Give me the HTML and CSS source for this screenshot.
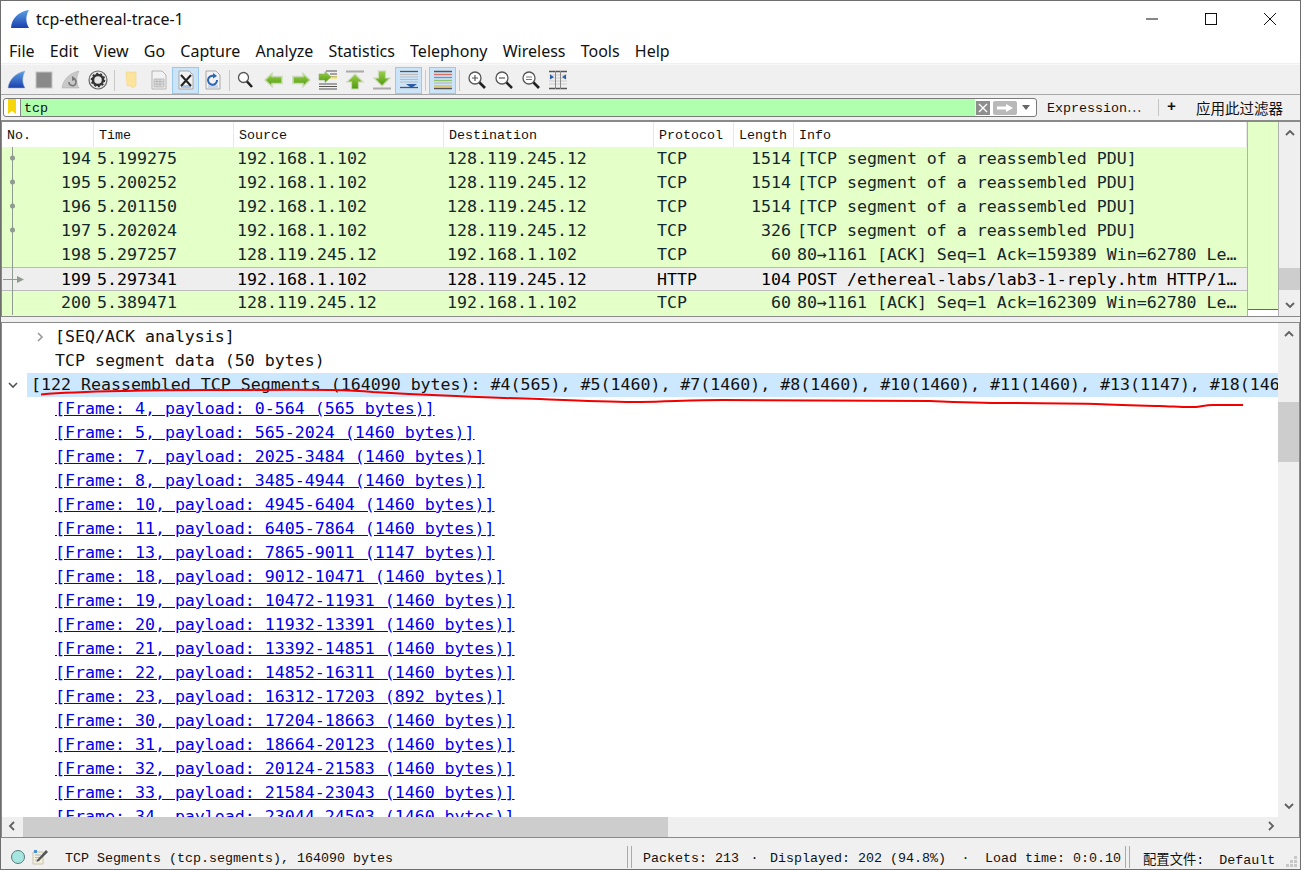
FILE: index.html
```html
<!DOCTYPE html>
<html lang="en">
<head>
<meta charset="utf-8">
<title>tcp-ethereal-trace-1</title>
<link rel="stylesheet" href="styles.css">
</head>
<body>
<div class="app">
  <svg width="0" height="0" class="defs">
    <defs>
      <linearGradient id="fin" x1="0" y1="0" x2="0" y2="1"><stop offset="0" stop-color="#5aa0e6"/><stop offset="1" stop-color="#1c3fae"/></linearGradient>
      <linearGradient id="green" x1="0" y1="0" x2="0" y2="1"><stop offset="0" stop-color="#9ad04a"/><stop offset="1" stop-color="#4e9a0e"/></linearGradient>
    </defs>
  </svg>

  <header class="titlebar">
    <svg class="app-icon" width="20" height="20" viewBox="0 0 20 20"><path d="M1 19C1.500 10 8 2.500 19 1C15.500 7 15.500 13 19 19Z" fill="url(#fin)"/></svg>
    <span class="title">tcp-ethereal-trace-1</span>
    <div class="winctl">
      <svg width="12" height="12" viewBox="0 0 12 12"><path d="M0 6H12" stroke="#111" fill="none"/></svg>
      <svg width="12" height="12" viewBox="0 0 12 12"><rect x=".5" y=".5" width="11" height="11" stroke="#111" fill="none"/></svg>
      <svg width="12" height="12" viewBox="0 0 12 12"><path d="M0 0L12 12M12 0L0 12" stroke="#111" fill="none"/></svg>
    </div>
  </header>

  <nav class="menubar">
    <span>File</span><span>Edit</span><span>View</span><span>Go</span><span>Capture</span><span>Analyze</span><span>Statistics</span><span>Telephony</span><span>Wireless</span><span>Tools</span><span>Help</span>
  </nav>

  <div class="toolbar">
    <span class="tool"><svg width="20" height="20" viewBox="0 0 20 20"><path d="M1 18C2 10 8 3 18 1C15 7 15 13 18 18Z" fill="url(#fin)" stroke="#9fb0c8" stroke-width=".5"/></svg></span>
    <span class="tool"><svg width="20" height="20" viewBox="0 0 20 20"><rect x="2" y="2" width="16" height="16" fill="#8a8a8a" stroke="#c4c4c4"/></svg></span>
    <span class="tool"><svg width="20" height="20" viewBox="0 0 20 20"><path d="M1 18C2 10 8 3 18 1C15 7 15 13 18 18Z" fill="#c8c8c8" stroke="#aaa" stroke-width=".5"/><path d="M13 9A3.500 3.500 0 1 1 8 12" fill="none" stroke="#777" stroke-width="1.500"/><path d="M11 6L15 9L11 11Z" fill="#777"/></svg></span>
    <span class="tool"><svg width="20" height="20" viewBox="0 0 20 20"><circle cx="10" cy="10" r="9" fill="#e8e8e8" stroke="#666" stroke-width="1.200"/><circle cx="10" cy="10" r="5" fill="none" stroke="#333" stroke-width="2.500"/><circle cx="10" cy="10" r="6.500" fill="none" stroke="#333" stroke-width="1.500" stroke-dasharray="2 2"/></svg></span>
    <span class="tool-sep"></span>
    <span class="tool"><svg width="20" height="20" viewBox="0 0 20 20"><path d="M4 2H10L11 4V2H14V16L10 18V16H5Z" fill="#fce49c" stroke="#f2d27c" stroke-width=".5"/></svg></span>
    <span class="tool"><svg width="20" height="20" viewBox="0 0 20 20"><path d="M3 1H13L17 5V19H3Z" fill="#f2f2f2" stroke="#b4b4b4"/><path d="M5 9H15V17H5ZM5 11.500H15M5 14H15M8 9V17M11 9V17" fill="#ddd" stroke="#b4b4b4" stroke-width=".8"/></svg></span>
    <span class="tool tool-on"><svg width="20" height="20" viewBox="0 0 20 20"><path d="M3 1H13L17 5V19H3Z" fill="#f2f2f2" stroke="#a8a8a8"/><path d="M5 15H15V18H5Z" fill="#a9c4e4"/><path d="M5 5L15 16M15 5L5 16" stroke="#222" stroke-width="2"/></svg></span>
    <span class="tool"><svg width="20" height="20" viewBox="0 0 20 20"><path d="M3 1H13L17 5V19H3Z" fill="#f2f2f2" stroke="#a8a8a8"/><path d="M5 15H15V18H5Z" fill="#c9d8ea"/><path d="M14 10A4.500 4.500 0 1 1 11 6" fill="none" stroke="#2a64b8" stroke-width="2"/><path d="M10 3L14 6L10 8.500Z" fill="#2a64b8"/></svg></span>
    <span class="tool-sep"></span>
    <span class="tool"><svg width="20" height="20" viewBox="0 0 20 20"><circle cx="6.500" cy="7.500" r="5" fill="#fff" stroke="#555" stroke-width="1.300"/><path d="M10 11.500L15 17" stroke="#222" stroke-width="2.600"/></svg></span>
    <span class="tool"><svg width="20" height="20" viewBox="0 0 20 20"><path d="M1 10L8 3.500V6.500H18V13.500H8V16.500Z" fill="url(#green)" stroke="#c9d9b4" stroke-width="1.500"/></svg></span>
    <span class="tool"><svg width="20" height="20" viewBox="0 0 20 20"><path d="M19 10L12 3.500V6.500H2V13.500H12V16.500Z" fill="url(#green)" stroke="#c9d9b4" stroke-width="1.500"/></svg></span>
    <span class="tool"><svg width="20" height="20" viewBox="0 0 20 20"><path d="M8 1H19M12 4H19M12 7H19M1 14H19M1 16.500H19M1 19H19" stroke="#555" stroke-width="1.200"/><path d="M12 7.500H19" stroke="#f3da4a" stroke-width="2"/><path d="M13 7L7 1.500V4H1V10H7V12.500Z" fill="url(#green)" stroke="#8cab6c" stroke-width=".6"/></svg></span>
    <span class="tool"><svg width="20" height="20" viewBox="0 0 20 20"><path d="M1 1.500H19" stroke="#aaa" stroke-width="2"/><path d="M10 4L18 12H13.500V19H6.500V12H2Z" fill="url(#green)" stroke="#c9d9b4" stroke-width="1.200"/></svg></span>
    <span class="tool"><svg width="20" height="20" viewBox="0 0 20 20"><path d="M1 18.500H19" stroke="#aaa" stroke-width="2"/><path d="M10 16L18 8H13.500V1H6.500V8H2Z" fill="url(#green)" stroke="#c9d9b4" stroke-width="1.200"/></svg></span>
    <span class="tool tool-on"><svg width="20" height="20" viewBox="0 0 20 20"><path d="M1 1.500H19" stroke="#555" stroke-width="1.300"/><path d="M1 4.500H19M1 7H19M1 9.500H19M1 12H19" stroke="#bbb"/><path d="M1 17.500H19" stroke="#555" stroke-width="1.300"/><path d="M7 14H18L12.500 18Z" fill="#2a5ca8"/></svg></span>
    <span class="tool-sep"></span>
    <span class="tool tool-on"><svg width="20" height="20" viewBox="0 0 20 20"><path d="M1 1.500H19M1 18.500H19" stroke="#555" stroke-width="1.300"/><path d="M1 4.500H19" stroke="#d96a5c" stroke-width="1.300"/><path d="M1 7.500H19" stroke="#6a8fd0" stroke-width="1.300"/><path d="M1 10.500H19" stroke="#8cc46c" stroke-width="1.300"/><path d="M1 13H19" stroke="#bbb" stroke-width="1.300"/><path d="M1 16H19" stroke="#e0b83c" stroke-width="1.300"/></svg></span>
    <span class="tool-sep"></span>
    <span class="tool"><svg width="20" height="20" viewBox="0 0 20 20"><circle cx="8" cy="8" r="6" fill="#fff" stroke="#555" stroke-width="1.300"/><path d="M5 8H11M8 5V11" stroke="#555" stroke-width="1.200"/><path d="M12.500 12.500L18 18" stroke="#222" stroke-width="2.600"/></svg></span>
    <span class="tool"><svg width="20" height="20" viewBox="0 0 20 20"><circle cx="8" cy="8" r="6" fill="#fff" stroke="#555" stroke-width="1.300"/><path d="M5 8H11" stroke="#555" stroke-width="1.200"/><path d="M12.500 12.500L18 18" stroke="#222" stroke-width="2.600"/></svg></span>
    <span class="tool"><svg width="20" height="20" viewBox="0 0 20 20"><circle cx="8" cy="8" r="6" fill="#fff" stroke="#555" stroke-width="1.300"/><path d="M5 7H11M5 9.500H11" stroke="#777"/><path d="M12.500 12.500L18 18" stroke="#222" stroke-width="2.600"/></svg></span>
    <span class="tool"><svg width="20" height="20" viewBox="0 0 20 20"><path d="M1 1.500H19M1 18.500H19" stroke="#555" stroke-width="1.300"/><path d="M1 5H19M1 8H19M1 11H19M1 14H19" stroke="#ccc"/><path d="M7.500 1V19M12.500 1V19" stroke="#888"/><path d="M2 4.500L6 7L2 9.500ZM18 4.500L14 7L18 9.500Z" fill="#2a5ca8"/></svg></span>
  </div>

  <div class="filterbar">
    <div class="filterbox">
      <span class="bookmark"><svg width="10" height="16" viewBox="0 0 10 16"><path d="M1 0H9V15L5 12L1 15Z" fill="#f5d60a"/></svg></span>
      <span class="filter-input">tcp</span>
      <span class="clear-btn"><svg width="14" height="14" viewBox="0 0 14 14"><rect width="14" height="14" fill="#8e8e8e"/><path d="M3 3L11 11M11 3L3 11" stroke="#fff" stroke-width="1.400"/></svg></span>
      <span class="apply-btn"><svg width="24" height="14" viewBox="0 0 24 14"><rect width="24" height="14" rx="2" fill="#b9b9b9"/><path d="M4 5.500H13V3L20 7L13 11V8.500H4Z" fill="#fff"/></svg></span>
      <span class="drop-btn"><svg width="8" height="5" viewBox="0 0 8 5"><path d="M0 0H8L4 5Z" fill="#666"/></svg></span>
    </div>
    <span class="expr">Expression<span class="cjk-dots">…</span></span>
    <span class="filter-sep"></span>
    <span class="plus">+</span>
    <span class="apply-label">应用此过滤器</span>
  </div>

  <section class="pane packets">
    <div class="packet-main">
      <div class="packet-cols packet-head">
        <span>No.</span><span>Time</span><span>Source</span><span>Destination</span><span>Protocol</span><span>Length</span><span>Info</span>
      </div>
      <div class="packet-body">
        <div class="packet-cols packet-row"><span class="num">194</span><span>5.199275</span><span>192.168.1.102</span><span>128.119.245.12</span><span>TCP</span><span class="num">1514</span><span>[TCP segment of a reassembled PDU]</span></div>
        <div class="packet-cols packet-row"><span class="num">195</span><span>5.200252</span><span>192.168.1.102</span><span>128.119.245.12</span><span>TCP</span><span class="num">1514</span><span>[TCP segment of a reassembled PDU]</span></div>
        <div class="packet-cols packet-row"><span class="num">196</span><span>5.201150</span><span>192.168.1.102</span><span>128.119.245.12</span><span>TCP</span><span class="num">1514</span><span>[TCP segment of a reassembled PDU]</span></div>
        <div class="packet-cols packet-row"><span class="num">197</span><span>5.202024</span><span>192.168.1.102</span><span>128.119.245.12</span><span>TCP</span><span class="num">326</span><span>[TCP segment of a reassembled PDU]</span></div>
        <div class="packet-cols packet-row"><span class="num">198</span><span>5.297257</span><span>128.119.245.12</span><span>192.168.1.102</span><span>TCP</span><span class="num">60</span><span>80→1161 [ACK] Seq=1 Ack=159389 Win=62780 Le…</span></div>
        <div class="packet-cols packet-row packet-sel"><span class="num">199</span><span>5.297341</span><span>192.168.1.102</span><span>128.119.245.12</span><span>HTTP</span><span class="num">104</span><span>POST /ethereal-labs/lab3-1-reply.htm HTTP/1…</span></div>
        <div class="packet-cols packet-row"><span class="num">200</span><span>5.389471</span><span>128.119.245.12</span><span>192.168.1.102</span><span>TCP</span><span class="num">60</span><span>80→1161 [ACK] Seq=1 Ack=162309 Win=62780 Le…</span></div>
        <svg class="conv-tree" width="30" height="168" viewBox="0 0 30 168"><path d="M10.500 0V168" stroke="#8f9a90"/><circle cx="10.500" cy="11" r="2.500" fill="#8f9a90"/><circle cx="10.500" cy="35" r="2.500" fill="#8f9a90"/><circle cx="10.500" cy="59" r="2.500" fill="#8f9a90"/><circle cx="10.500" cy="83" r="2.500" fill="#8f9a90"/><path d="M1 132.500H16" stroke="#8f9a90"/><path d="M15 129L22 132.500L15 136Z" fill="#8f9a90"/></svg>
      </div>
    </div>
    <div class="minimap"></div>
    <div class="vscroll">
      <svg class="arrow" width="12" height="12" viewBox="0 0 12 12"><path d="M2 8L6 4L10 8" fill="none" stroke="#606060" stroke-width="1.800"/></svg>
      <div class="vtrack list-track"><div class="thumb list-thumb"></div></div>
      <svg class="arrow" width="12" height="12" viewBox="0 0 12 12"><path d="M2 4L6 8L10 4" fill="none" stroke="#606060" stroke-width="1.800"/></svg>
    </div>
  </section>

  <div class="splitter"></div>

  <section class="pane details">
    <div class="details-top">
      <div class="details-body">
        <div class="dt dt-child"><svg class="tw" width="12" height="12" viewBox="0 0 12 12"><path d="M4 2L8 6L4 10" fill="none" stroke="#999" stroke-width="1.600"/></svg><span>[SEQ/ACK analysis]</span></div>
        <div class="dt dt-leaf">TCP segment data (50 bytes)</div>
        <div class="dt dt-open"><svg class="tw" width="12" height="12" viewBox="0 0 12 12"><path d="M2 4L6 8L10 4" fill="none" stroke="#555" stroke-width="1.600"/></svg><span class="dt-hl">[122 Reassembled TCP Segments (164090 bytes): #4(565), #5(1460), #7(1460), #8(1460), #10(1460), #11(1460), #13(1147), #18(1460), #19(1460), #20(1460)</span></div>
        <div class="dt dt-leaf dt-link">[Frame: 4, payload: 0-564 (565 bytes)]</div>
        <div class="dt dt-leaf dt-link">[Frame: 5, payload: 565-2024 (1460 bytes)]</div>
        <div class="dt dt-leaf dt-link">[Frame: 7, payload: 2025-3484 (1460 bytes)]</div>
        <div class="dt dt-leaf dt-link">[Frame: 8, payload: 3485-4944 (1460 bytes)]</div>
        <div class="dt dt-leaf dt-link">[Frame: 10, payload: 4945-6404 (1460 bytes)]</div>
        <div class="dt dt-leaf dt-link">[Frame: 11, payload: 6405-7864 (1460 bytes)]</div>
        <div class="dt dt-leaf dt-link">[Frame: 13, payload: 7865-9011 (1147 bytes)]</div>
        <div class="dt dt-leaf dt-link">[Frame: 18, payload: 9012-10471 (1460 bytes)]</div>
        <div class="dt dt-leaf dt-link">[Frame: 19, payload: 10472-11931 (1460 bytes)]</div>
        <div class="dt dt-leaf dt-link">[Frame: 20, payload: 11932-13391 (1460 bytes)]</div>
        <div class="dt dt-leaf dt-link">[Frame: 21, payload: 13392-14851 (1460 bytes)]</div>
        <div class="dt dt-leaf dt-link">[Frame: 22, payload: 14852-16311 (1460 bytes)]</div>
        <div class="dt dt-leaf dt-link">[Frame: 23, payload: 16312-17203 (892 bytes)]</div>
        <div class="dt dt-leaf dt-link">[Frame: 30, payload: 17204-18663 (1460 bytes)]</div>
        <div class="dt dt-leaf dt-link">[Frame: 31, payload: 18664-20123 (1460 bytes)]</div>
        <div class="dt dt-leaf dt-link">[Frame: 32, payload: 20124-21583 (1460 bytes)]</div>
        <div class="dt dt-leaf dt-link">[Frame: 33, payload: 21584-23043 (1460 bytes)]</div>
        <div class="dt dt-leaf dt-link">[Frame: 34, payload: 23044-24503 (1460 bytes)]</div>
      </div>
      <div class="vscroll">
        <svg class="arrow" width="12" height="12" viewBox="0 0 12 12"><path d="M2 8L6 4L10 8" fill="none" stroke="#606060" stroke-width="1.800"/></svg>
        <div class="vtrack detail-track"><div class="thumb detail-thumb"></div></div>
        <svg class="arrow" width="12" height="12" viewBox="0 0 12 12"><path d="M2 4L6 8L10 4" fill="none" stroke="#606060" stroke-width="1.800"/></svg>
      </div>
    </div>
    <div class="hscroll">
      <svg class="arrow" width="12" height="12" viewBox="0 0 12 12"><path d="M8 2L4 6L8 10" fill="none" stroke="#606060" stroke-width="1.800"/></svg>
      <div class="htrack"><div class="thumb hthumb"></div></div>
      <svg class="arrow" width="12" height="12" viewBox="0 0 12 12"><path d="M4 2L8 6L4 10" fill="none" stroke="#606060" stroke-width="1.800"/></svg>
    </div>
  </section>

  <footer class="statusbar">
    <span class="led"></span>
    <svg class="note" width="16" height="16" viewBox="0 0 16 16"><path d="M1 3H11V15H1Z" fill="#f4f0dc" stroke="#c8c4ac"/><path d="M3 6H9M3 8.500H9M3 11H8" stroke="#a8b8c8"/><path d="M5 11L14 1L16 3L7 12L4.500 13Z" fill="#555"/><path d="M2 1H5V4H2Z" fill="#4a90d0"/></svg>
    <span class="status-field">TCP Segments (tcp.segments), 164090 bytes</span>
    <span class="status-sep"></span>
    <span class="status-stats"><span>Packets: 213</span><span class="dot">·</span><span>Displayed: 202 (94.8%)</span><span class="dot dot-wide">·</span><span>Load time: 0:0.10</span></span>
    <span class="status-sep status-sep2"></span>
    <span class="status-profile">配置文件: Default</span>
    <svg class="grip" width="12" height="12" viewBox="0 0 12 12"><path d="M8 0H11V3H8ZM4 4H7V7H4ZM8 4H11V7H8ZM0 8H3V11H0ZM4 8H7V11H4ZM8 8H11V11H8Z" fill="#c8c8c8"/></svg>
  </footer>

  <svg class="scribble" width="1301" height="870" viewBox="0 0 1301 870"><path d="M41 394.500C70 392 100 391.500 125 391C160 390 190 390 207 390C250 390 300 389.500 332 390C350 390.500 360 391 373 392C400 393.500 430 395 456 396C490 397.500 515 398.500 540 399C580 400.500 610 402 640 402C670 401.500 695 400 723 400C790 400 860 400.500 930 401C960 402 985 403 1013 403C1045 403.500 1070 403.500 1096 404C1120 405 1140 405.500 1159 406C1175 406.500 1185 407.500 1196 407C1203 406 1207 405 1213 405C1225 405 1235 405 1243 405" fill="none" stroke="#f20000" stroke-width="2"/></svg>
</div>
</body>
</html>
```

FILE: styles.css
```css
* { box-sizing: border-box; }
html, body { margin: 0; padding: 0; }
body { width: 1301px; height: 870px; overflow: hidden; background: #f0f0f0; font-family: "Liberation Mono", monospace; }

.app {
  position: relative;
  width: 1301px;
  height: 870px;
  display: flex;
  flex-direction: column;
  border: 1px solid #6e6e6e;
  background: #f0f0f0;
  overflow: hidden;
}
.defs { position: absolute; }

.titlebar {
  height: 37px;
  flex: none;
  display: flex;
  align-items: center;
  padding-left: 9px;
  background: #fff;
  font-family: "Noto Sans", sans-serif;
  font-size: 16px;
  color: #111;
}
.app-icon { flex: none; margin-bottom: 1px; }
.title { margin-left: 6px; margin-bottom: 1px; }
.winctl { margin-left: auto; display: flex; gap: 47px; padding-right: 24px; margin-bottom: 2px; }

.menubar {
  height: 26px;
  flex: none;
  display: flex;
  align-items: center;
  gap: 15.2px;
  padding-left: 8px;
  background: #fff;
  font-family: "Noto Sans", sans-serif;
  font-size: 16px;
  color: #111;
  border-bottom: 1px solid #f0f0f0;
}

.toolbar {
  height: 30px;
  flex: none;
  display: flex;
  align-items: center;
  padding: 1px 0 0 2px;
  background: #f0f0f0;
  border-top: 1px solid #f8f8f8;
}
.tool {
  width: 27px;
  height: 27px;
  flex: none;
  display: flex;
  align-items: center;
  justify-content: center;
  border: 1px solid transparent;
}
.tool-on { background: #cce4f7; border-color: #99c9ef; }
.tool-sep { width: 1px; height: 21px; margin: 0 3px; background: #c8c8c8; flex: none; }

.filterbar {
  height: 27px;
  flex: none;
  display: flex;
  align-items: center;
  padding-left: 2px;
  border-top: 1px solid #a8a8a8;
  border-bottom: 1px solid #8a8a8a;
  font-size: 13.33px;
  color: #111;
}
.filterbox {
  width: 1034px;
  height: 19px;
  flex: none;
  display: flex;
  align-items: center;
  background: #fff;
  border: 1px solid #7a7a7a;
  border-radius: 3px;
}
.bookmark {
  width: 17px;
  height: 17px;
  flex: none;
  display: flex;
  justify-content: center;
  align-items: flex-start;
  border-right: 1px solid #888;
}
.filter-input {
  width: 954px;
  height: 17px;
  flex: none;
  padding-left: 3px;
  line-height: 20px;
  background: #afffaf;
  font-size: 13.33px;
}
.clear-btn { display: flex; margin-left: 1px; }
.apply-btn { display: flex; margin-left: 3px; }
.drop-btn { display: flex; margin-left: 5px; }
.expr { margin-left: 10px; width: 111px; flex: none; margin-bottom: 2px; }
.cjk-dots { font-family: "Noto Sans CJK SC", sans-serif; }
.filter-sep { width: 1px; height: 17px; background: #c4c4c4; flex: none; }
.plus { margin-left: 8px; width: 29px; flex: none; font-weight: bold; font-size: 15px; }
.apply-label { font-family: "Noto Sans CJK SC", sans-serif; font-size: 14.5px; }

.pane { border: 1px solid #8a8a8a; background: #fff; flex: none; }

.packets { height: 196px; display: flex; }
.packet-main { width: 1245px; flex: none; display: flex; flex-direction: column; }
.packet-cols { display: grid; grid-template-columns: 92px 140px 210px 210px 80px 60px 1fr; }
.packet-head { height: 25px; background: #fff; font-size: 13.33px; line-height: 27px; color: #111; }
.packet-head span { padding-left: 5px; border-right: 1px solid #e8e8e8; }
.packet-body { position: relative; flex: 1; background: #e4ffc7; }
.packet-row {
  height: 24px;
  font-family: "DejaVu Sans Mono", monospace;
  font-size: 16.6px;
  line-height: 23px;
  color: #12272e;
  white-space: nowrap;
}
.packet-row span { padding: 0 3px; overflow: hidden; }
.packet-row .num { text-align: right; }
.packet-sel { background: #eee; border-top: 1px solid #bbb; border-bottom: 1px solid #bbb; color: #000; line-height: 23px; }
.conv-tree { position: absolute; left: 0; top: 0; }

.minimap {
  width: 32px;
  flex: none;
  border-left: 1px solid #b0b0b0;
  border-right: 1px solid #b0b0b0;
  background: linear-gradient(#e4ffc7 0, #e4ffc7 187px, #1e78d0 187px, #1e78d0 188px, #fff 188px);
}

.vscroll {
  width: 21px;
  flex: none;
  display: flex;
  flex-direction: column;
  align-items: center;
  background: #efefef;
}
.arrow { flex: none; }
.vscroll .arrow:first-child { margin-top: 5px; }
.vscroll .arrow:last-child { margin-bottom: 5px; }
.vtrack { flex: 1; width: 100%; margin: 3px 0; }
.thumb { background: #cdcdcd; }
.list-thumb { height: 22px; margin-top: 126px; }
.detail-thumb { height: 60px; margin-top: 59px; }

.splitter { height: 5px; flex: none; background: #f0f0f0; }

.details { height: 516px; display: flex; flex-direction: column; }
.details-top { flex: 1; min-height: 0; display: flex; }
.details-body { flex: 1; min-width: 0; overflow: hidden; padding-top: 2px; }
.dt {
  height: 24px;
  font-family: "DejaVu Sans Mono", monospace;
  font-size: 16.6px;
  line-height: 24px;
  color: #111;
  white-space: nowrap;
  overflow: hidden;
}
.dt-leaf { padding-left: 53px; }
.dt-child { display: flex; align-items: center; padding-left: 32px; }
.dt-child .tw { margin-right: 9px; flex: none; }
.dt-open { display: flex; align-items: center; padding-left: 5px; }
.dt-open .tw { margin-right: 8px; flex: none; }
.dt-hl { flex: 1; min-width: 0; overflow: hidden; padding-left: 4px; background: #cce8ff; }
.dt-link { color: #0000ee; text-decoration: underline; }

.hscroll { height: 20px; flex: none; display: flex; align-items: center; background: #efefef; padding-left: 4px; }
.hscroll .arrow { margin-bottom: 2px; }
.htrack { width: 1237px; height: 100%; margin-left: 5px; margin-right: 5px; }
.hthumb { width: 645px; height: 100%; }

.statusbar {
  flex: 1;
  min-height: 0;
  display: flex;
  align-items: center;
  padding: 6px 0 0 10px;
  font-size: 13.33px;
  color: #111;
  white-space: nowrap;
}
.led {
  width: 14px;
  height: 14px;
  flex: none;
  border-radius: 50%;
  background: #a6e6e0;
  border: 1px solid #5a7a7a;
}
.note { margin-left: 7px; flex: none; }
.status-field { margin-left: 17px; margin-top: 3px; width: 562px; flex: none; }
.status-sep { width: 5px; height: 22px; flex: none; border-left: 1px solid #aaa; border-right: 1px solid #aaa; }
.status-stats { display: flex; margin-left: 11px; margin-top: 3px; width: 482px; flex: none; }
.dot { width: 31px; text-align: center; }
.dot-wide { width: 39px; }
.status-profile { margin-left: 13px; margin-top: 3px; word-spacing: 7px; font-family: "Liberation Mono", "Noto Sans CJK SC", monospace; }
.grip { position: absolute; right: 2px; bottom: 1px; }

.scribble { position: absolute; left: -1px; top: -1px; pointer-events: none; }
```
